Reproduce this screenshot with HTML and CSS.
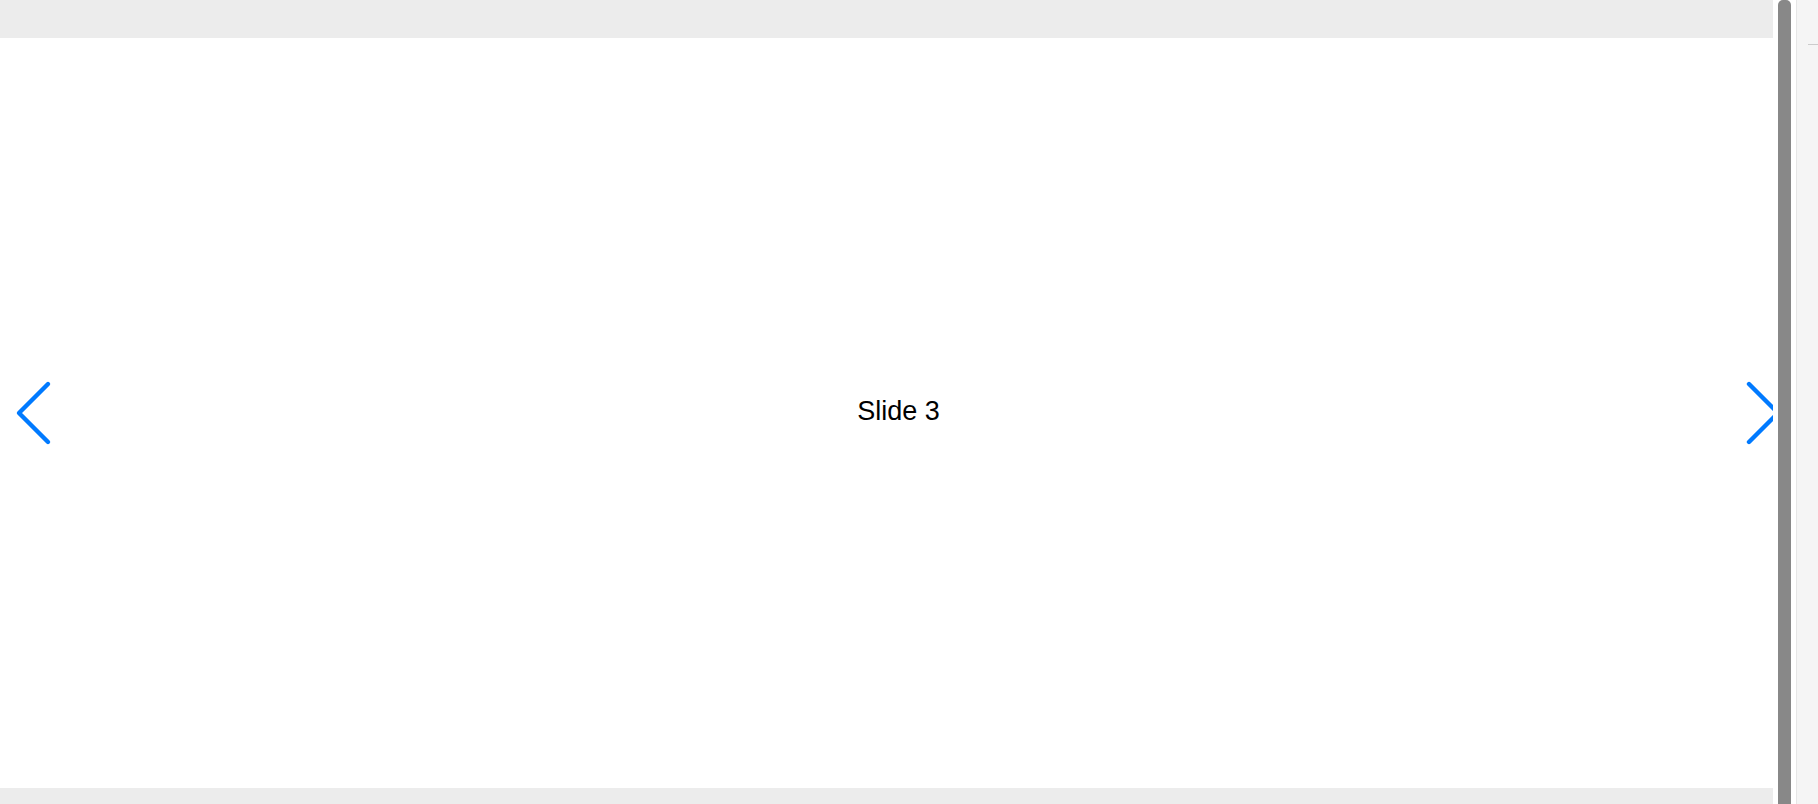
FILE: index.html
```html
<!DOCTYPE html>
<html lang="en">
    <head>
        <title>slider</title>
        <meta charset="utf-8" />
        <meta name="viewport" content="width=device-width, initial-scale=1.0" />
        <link rel="stylesheet" href="styles.css">
    </head>
    <body>
        <div id="page">
            <div id="top"></div>
            <div class="swiper">
                <div class="slide">Slide 3</div>
                <button class="nav prev" type="button">
                    <svg width="40" height="66" viewBox="0 0 40 66">
                        <polyline points="34,4 5,33 34,62" />
                    </svg>
                </button>
                <button class="nav next" type="button">
                    <svg width="40" height="66" viewBox="0 0 40 66">
                        <polyline points="6,4 35,33 6,62" />
                    </svg>
                </button>
            </div>
        </div>
        <div id="side">
            <div class="gutter"><div class="thumb"></div></div>
            <div class="panel"><div class="tick"></div></div>
        </div>
    </body>
</html>
```

FILE: styles.css
```css
html, body {
    margin: 0px;
    padding: 0px;
    height: 100%;
    overflow: hidden;
    background: #ececec;
    font-family: "Liberation Sans", Arial, sans-serif;
}
#page {
    width: 1818px;
}
#top {
    height: 38px;
}
.swiper {
    position: relative;
    display: flex;
    align-items: center;
    justify-content: center;
    width: 1797px;
    height: 750px;
    background: #fff;
}
.slide {
    padding-bottom: 4px;
    font-size: 27px;
    color: #000;
}
.nav {
    position: absolute;
    top: 50%;
    margin-top: -33px;
    border: none;
    padding: 0px;
    width: 40px;
    height: 66px;
    background: none;
    cursor: pointer;
}
.nav svg {
    display: block;
}
.nav polyline {
    fill: none;
    stroke: #007aff;
    stroke-width: 4.4;
    stroke-linecap: round;
    stroke-linejoin: round;
}
.prev {
    left: 14px;
}
.next {
    right: 14px;
}
#side {
    position: fixed;
    top: 0px;
    left: 1773px;
    display: flex;
    width: 45px;
    height: 100%;
}
.gutter {
    width: 23px;
    background: #fff;
    border-right: 1px solid #e6e6e6;
}
.thumb {
    margin-left: 5px;
    width: 13px;
    height: 100%;
    border-radius: 5px 5px 0px 0px;
    background: #888;
}
.panel {
    flex: 1;
    background: #f5f5f5;
}
.tick {
    margin: 44px 0px 0px 11px;
    height: 1px;
    background: #ccc;
}
```
